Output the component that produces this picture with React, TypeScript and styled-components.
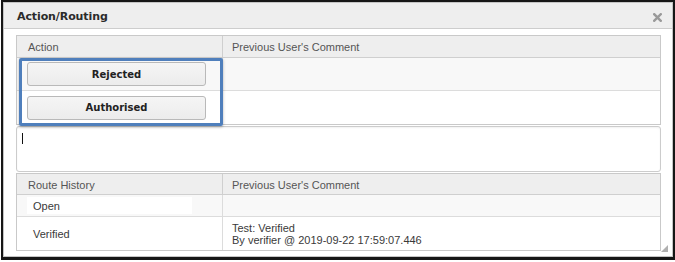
import styled, { createGlobalStyle } from "styled-components";

const GlobalStyle = createGlobalStyle`
  html, body {
    margin: 0;
    padding: 0;
    background: #ffffff;
  }
  * {
    box-sizing: border-box;
  }
`;

const Frame = styled.div`
  margin-left: 1px;
  width: 674px;
  height: 260px;
  border: 2px solid #161616;
  border-bottom-width: 3px;
  background: #ffffff;
`;

const Dialog = styled.div`
  position: relative;
  height: 100%;
  border: 1px solid #c4c4c4;
  background: #ffffff;
  display: flex;
  flex-direction: column;
`;

const TitleBar = styled.div`
  height: 26px;
  flex: none;
  display: flex;
  align-items: center;
  justify-content: space-between;
  padding: 1px 10px 0 13px;
  background: #eeeeee;
  border-bottom: 1px solid #cdcdcd;
`;

const Title = styled.span`
  font-family: "DejaVu Sans", Verdana, sans-serif;
  font-weight: bold;
  font-size: 11px;
  color: #2b2b2b;
  letter-spacing: -0.1px;
`;

const CloseIcon = styled.svg`
  width: 9px;
  height: 9px;
  margin-top: 3px;
`;

const Body = styled.div`
  padding: 6px 11px 0 12px;
  display: flex;
  flex-direction: column;
`;

const Table = styled.div`
  position: relative;
  display: grid;
  grid-template-columns: 206px 1fr;
  border: 1px solid #c9c9c9;
  font-family: "Liberation Sans", Arial, sans-serif;
  font-size: 11px;
  color: #3a3a3a;
`;

const HeadCell = styled.div<{ $first?: boolean; $h: number }>`
  height: ${(p) => p.$h}px;
  display: flex;
  align-items: center;
  padding-left: ${(p) => (p.$first ? 11 : 9)}px;
  background: #eeeeee;
  border-bottom: 1px solid #cfcfcf;
  border-right: ${(p) => (p.$first ? "1px solid #cfcfcf" : "none")};
  color: #555555;
  padding-top: 1px;
`;

const Cell = styled.div<{ $first?: boolean; $h: number; $shade?: boolean; $last?: boolean; $pad?: number }>`
  height: ${(p) => p.$h}px;
  display: flex;
  flex-direction: column;
  justify-content: center;
  padding-left: ${(p) => p.$pad ?? 10}px;
  background: ${(p) => (p.$shade ? "#f8f8f8" : "#ffffff")};
  border-bottom: ${(p) => (p.$last ? "none" : "1px solid #dcdcdc")};
  border-right: ${(p) => (p.$first ? "1px solid #dcdcdc" : "none")};
`;

const ActionButton = styled.button`
  width: 179px;
  height: 24px;
  padding: 0;
  border: 1px solid #b9b9b9;
  border-radius: 3px;
  background: linear-gradient(#f5f5f5, #ececec);
  font-family: "DejaVu Sans", Verdana, sans-serif;
  font-weight: bold;
  font-size: 10px;
  color: #222222;
  cursor: pointer;
`;

const Highlight = styled.div`
  position: absolute;
  left: 2px;
  top: 22px;
  width: 204px;
  height: 68px;
  border: 3px solid #4f7fbc;
  border-radius: 2px;
  box-shadow: 0 1px 3px rgba(0, 0, 0, 0.3);
  pointer-events: none;
`;

const CommentBox = styled.div`
  margin-top: 1px;
  height: 46px;
  border: 1px solid #cccccc;
  border-radius: 3px;
  padding: 6px 0 0 5px;
  background: #ffffff;
  box-shadow: inset 0 1px 2px rgba(0, 0, 0, 0.06);
`;

const Caret = styled.span`
  display: block;
  width: 1px;
  height: 11px;
  background: #111111;
`;

const SecondTable = styled(Table)`
  margin-top: 1px;
`;

const StatusField = styled.div`
  width: 165px;
  height: 17px;
  display: flex;
  align-items: center;
  padding-left: 6px;
  background: #ffffff;
`;

const Line = styled.div`
  line-height: 12px;
`;

const Grip = styled.svg`
  position: absolute;
  right: 4px;
  bottom: 4px;
  width: 7px;
  height: 7px;
`;

export default function App() {
  return (
    <>
      <GlobalStyle />
      <Frame>
        <Dialog>
          <TitleBar>
            <Title>Action/Routing</Title>
            <CloseIcon viewBox="0 0 9 9">
              <path d="M1.2 1.2 L7.8 7.8 M7.8 1.2 L1.2 7.8" stroke="#9a9a9a" strokeWidth="2.4" strokeLinecap="square" />
            </CloseIcon>
          </TitleBar>
          <Body>
            <Table>
              <HeadCell $first $h={22}>Action</HeadCell>
              <HeadCell $h={22}>Previous User's Comment</HeadCell>
              <Cell $first $h={33} $shade>
                <ActionButton>Rejected</ActionButton>
              </Cell>
              <Cell $h={33} $shade />
              <Cell $first $h={33} $last>
                <ActionButton>Authorised</ActionButton>
              </Cell>
              <Cell $h={33} $last />
              <Highlight />
            </Table>
            <CommentBox>
              <Caret />
            </CommentBox>
            <SecondTable>
              <HeadCell $first $h={21}>Route History</HeadCell>
              <HeadCell $h={21}>Previous User's Comment</HeadCell>
              <Cell $first $h={22} $shade>
                <StatusField>Open</StatusField>
              </Cell>
              <Cell $h={22} $shade />
              <Cell $first $h={33} $last $pad={16}>
                Verified
              </Cell>
              <Cell $h={33} $last $pad={9}>
                <Line>Test: Verified</Line>
                <Line>By verifier @ 2019-09-22 17:59:07.446</Line>
              </Cell>
            </SecondTable>
          </Body>
          <Grip viewBox="0 0 7 7">
            <path d="M7 0 L7 7 L0 7 Z" fill="#b0b0b0" />
          </Grip>
        </Dialog>
      </Frame>
    </>
  );
}
